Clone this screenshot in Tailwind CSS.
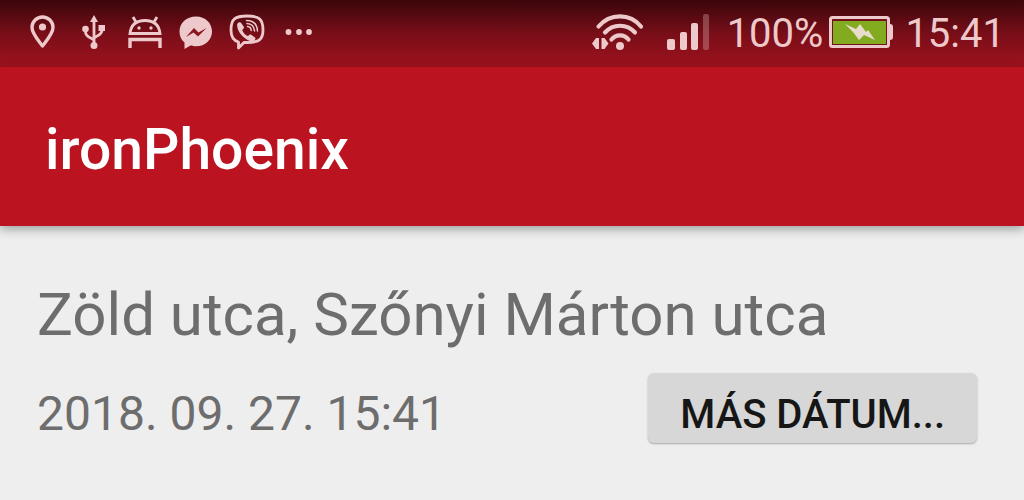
<!DOCTYPE html>
<html lang="hu">

<head>
    <meta charset="UTF-8">
    <meta name="viewport" content="width=device-width, initial-scale=1.0">
    <title>ironPhoenix</title>
    <script src="https://cdn.jsdelivr.net/npm/@tailwindcss/browser@4"></script>
</head>

<body class="min-h-screen bg-[#eeeeee] font-['Roboto',sans-serif] text-[#6d6d6d]">

    <!-- status bar -->
    <div class="flex h-[67px] items-center justify-between bg-linear-to-b from-[#3c060b] via-[#780e18] to-[#a0121e] pr-[19px] pb-1 pl-[25px] text-[#eec9cb]">
        <div class="flex items-center gap-[15px]">
            <svg class="size-9" viewBox="0 0 36 36" fill="none" stroke="currentColor" stroke-width="3.4">
                <path d="M17.5 32C13 26 7 19.500 7 13.500a10.500 10.500 0 0 1 21 0C28 19.500 22 26 17.500 32Z" stroke-linejoin="round" />
                <circle cx="17.500" cy="13" r="3.600" fill="currentColor" stroke="none" />
            </svg>
            <svg class="size-9" viewBox="0 0 36 36" fill="none" stroke="currentColor" stroke-width="2.8">
                <path d="M18 30V6M18 26.500C17 23.500 9.500 24 9.500 18V14M18 24.500C19 21.500 26 22 26 16V14" />
                <path d="M18 1l4 7h-8ZM22.500 11h6.500v6h-6.500Z" fill="currentColor" stroke="none" />
                <circle cx="9.500" cy="15" r="3.300" fill="currentColor" stroke="none" />
                <circle cx="18" cy="31.500" r="3.500" fill="currentColor" stroke="none" />
            </svg>
            <svg class="size-9" viewBox="0 0 36 36" fill="none" stroke="currentColor" stroke-width="2.8">
                <path d="M3 19.500C4 11 9 6.500 18 6.500S32 11 33 19.500ZM9 8L6 3M27 8l3-5" />
                <path d="M3 34V25.500H33V34" stroke-width="3.400" />
                <circle cx="12" cy="14" r="1.700" fill="currentColor" stroke="none" />
                <circle cx="24" cy="14" r="1.700" fill="currentColor" stroke="none" />
            </svg>
            <svg class="size-9" viewBox="0 0 36 36">
                <path fill="currentColor" d="M18 2.500C8.500 2.500 1.500 9 1.500 17.500c0 5 2 8.500 5 11v6.500l6-3.500c2 .6 3.500.8 5.500.8 9.500 0 16-6.500 16-14.800S27.500 2.500 18 2.500Z" />
                <path fill="#8b1420" d="M8 23L16 14l4.500 4.500 8-4.500-8.500 8.500-4.500-4Z" />
            </svg>
            <svg class="size-9" viewBox="0 0 36 36" fill="none" stroke="currentColor">
                <path d="M18 2C6 2 2 5 2 16c0 7 2 10.500 7.500 12v6l5.500-5.500H18c12 0 16-3 16-12.500C34 5 30 2 18 2Z" stroke-width="2.800" stroke-linejoin="round" />
                <path d="M8.500 9.500c1-1.300 2.500-1.800 3.500-.8l2.800 4c.7 1.200-.4 2-1.600 3.200 1 3 3 5 5.800 6.200 1.200-1.400 2.200-2 3.500-1.200l3.500 2.500c1.500 1.300-.8 4-3 4.200C16 26.500 8.500 18 8.300 12.500c-.2-1.200-.3-2.200.2-3Z" fill="currentColor" stroke="none" />
                <path d="M18.500 12.500q3.500.3 3.700 4M18 9.500q7 .3 7.500 7.500M17.500 6.500q10.500 0 11 10.500" stroke-width="1.500" stroke-linecap="round" />
            </svg>
            <svg class="size-9" viewBox="0 0 36 36" fill="currentColor">
                <circle cx="8.500" cy="18" r="2.900" />
                <circle cx="19" cy="18" r="2.900" />
                <circle cx="29" cy="18" r="2.900" />
            </svg>
        </div>

        <div class="flex items-center">
            <svg class="mr-[23px] h-9 w-[52px]" viewBox="0 0 52 36" fill="none" stroke="currentColor" stroke-width="4.2" stroke-linecap="round">
                <path d="M6.500 12.500C18 -1 38 -1 49 12.500M13 18.500C21 9.500 35 9.500 43 18.500M19.500 25.500C24 20 32 20 36.500 25.500" />
                <circle cx="28" cy="32" r="4" fill="currentColor" stroke="none" />
                <path d="M7 24v11H4L0 29.500 4 24ZM9.500 24h3l4 5.500-4 5.500h-3Z" fill="currentColor" stroke="none" />
            </svg>
            <svg class="mr-[17px] h-9 w-[43px]" viewBox="0 0 43 36" fill="currentColor">
                <rect x="0" y="25" width="8" height="11" rx="2" />
                <rect x="13" y="18" width="7" height="18" rx="2" />
                <rect x="24" y="9" width="7" height="27" rx="2" />
                <rect x="36" y="0" width="6" height="36" rx="2" opacity=".3" />
            </svg>
            <span class="pt-1 text-[40px] leading-10">100%</span>
            <svg class="mr-3 ml-1.5 h-8 w-16" viewBox="0 0 64 32">
                <path fill="currentColor" d="M58 8h3q3 0 3 3v10q0 3-3 3h-3Z" />
                <rect x="1.500" y="1.500" width="58" height="29" rx="2" fill="#741019" stroke="currentColor" stroke-width="3" />
                <rect x="4" y="5" width="53" height="23" fill="#83ab20" />
                <path fill="#e8dccb" d="M16 8L27 13 31 8 37 16 39 14 46 24 35 19 30 24 24 16Z" />
            </svg>
            <span class="pt-1 text-[40px] leading-10">15:41</span>
        </div>
    </div>

    <!-- app bar -->
    <header class="relative flex h-[159px] items-center bg-[#bb1420] px-[45px] pt-[7px] shadow-[0_3px_10px_rgba(0,0,0,0.35)]">
        <h1 class="text-[57px] leading-16 font-medium text-white">ironPhoenix</h1>
    </header>

    <main class="pt-[53px] pr-9 pl-[37px]">
        <h2 class="text-[60px] leading-[72px]">Zöld utca, Szőnyi Márton utca</h2>
        <div class="mt-[22px] flex items-center justify-between pr-[11px]">
            <time datetime="2018-09-27T15:41" class="pt-3 text-[48px] leading-14">2018. 09. 27. 15:41</time>
            <button type="button" class="h-[70px] rounded-md bg-[#d7d7d7] px-8 pt-[13px] text-[40px] leading-12 font-medium text-[#161616] shadow-[0_1px_2px_rgba(0,0,0,0.3)]">MÁS DÁTUM...</button>
        </div>
    </main>

</body>

</html>
